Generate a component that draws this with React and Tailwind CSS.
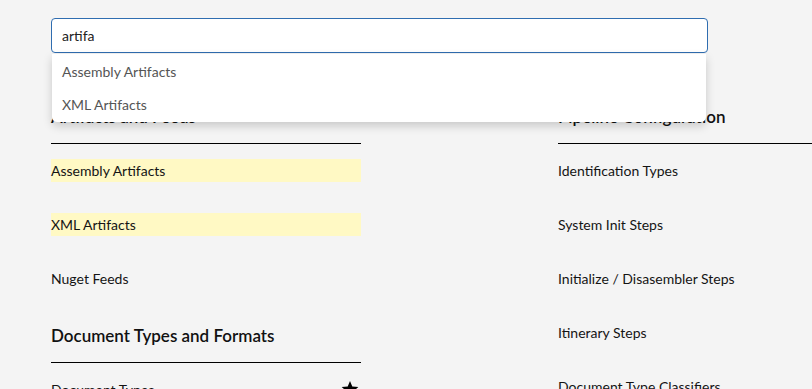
import React from 'react';

const leftSections = [
    {
        title: 'Artifacts and Feeds',
        items: [
            { name: 'Assembly Artifacts', match: true },
            { name: 'XML Artifacts', match: true },
            { name: 'Nuget Feeds' },
        ],
    },
    {
        title: 'Document Types and Formats',
        items: [{ name: 'Document Types', starred: true }],
    },
];

const rightSections = [
    {
        title: 'Pipeline Configuration',
        items: [
            { name: 'Identification Types' },
            { name: 'System Init Steps' },
            { name: 'Initialize / Disasembler Steps' },
            { name: 'Itinerary Steps' },
            { name: 'Document Type Classifiers' },
        ],
    },
];

function Star() {
    return (
        <svg width="18" height="17" viewBox="0 0 24 23" className="fill-black">
            <path d="M12 0l3.1 7.6 8.2.6-6.3 5.3 2 8L12 17.2 5 21.5l2-8L.7 8.2l8.2-.6z" />
        </svg>
    );
}

function Section({ section, first }) {
    return (
        <div className={first ? '' : 'mt-[34px]'}>
            <div className="border-b border-black pb-[15px]">
                <h2 className="text-[17px] leading-[23px] font-semibold text-[#111]">{section.title}</h2>
            </div>
            <ul className="flex flex-col gap-[31px] pt-[15px]">
                {section.items.map((item) => (
                    <li
                        key={item.name}
                        className={
                            'h-[23px] flex items-center justify-between text-[14px] text-[#141414] ' +
                            (item.match ? 'bg-[#fff9c4]' : '')
                        }
                    >
                        <span>{item.name}</span>
                        {item.starred && <span className="mr-[2px] flex"><Star /></span>}
                    </li>
                ))}
            </ul>
        </div>
    );
}

export default function App() {
    const [query, setQuery] = React.useState('artifa');
    const suggestions = ['Assembly Artifacts', 'XML Artifacts'];

    return (
        <div
            className="w-[812px] h-[389px] overflow-hidden bg-[#f4f4f4] pl-[51px] pt-[18px]"
            style={{ fontFamily: 'Lato, "Noto Sans", sans-serif' }}
        >
            <div className="relative w-[657px] z-10">
                <input
                    value={query}
                    onChange={(e) => setQuery(e.target.value)}
                    className="w-full h-[35px] bg-white border border-[#2f6db0] rounded-[4px] px-[10px] text-[14px] text-[#222] outline-none"
                />
                <div className="absolute left-[1px] right-[2px] top-[36px] bg-white rounded-b-[5px] shadow-[0_4px_10px_rgba(0,0,0,0.18)] pt-[1px] pb-[1px]">
                    {suggestions.map((s) => (
                        <div key={s} className="h-[33px] flex items-center px-[10px] text-[14px] text-[#555]">
                            {s}
                        </div>
                    ))}
                </div>
            </div>

            <div className="flex gap-[197px] mt-[52px]">
                <div className="w-[310px] shrink-0">
                    {leftSections.map((s, i) => (
                        <Section key={s.title} section={s} first={i === 0} />
                    ))}
                </div>
                <div className="w-[310px] shrink-0">
                    {rightSections.map((s, i) => (
                        <Section key={s.title} section={s} first={i === 0} />
                    ))}
                </div>
            </div>
        </div>
    );
}
